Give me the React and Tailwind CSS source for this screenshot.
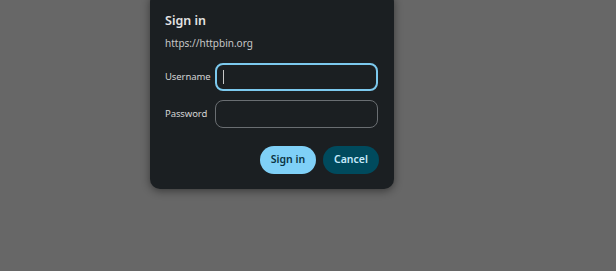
import React from 'react';

function App() {
  return (
    <div className="min-h-screen w-full bg-[#676767] font-['Noto_Sans',sans-serif]">
      <div className="ml-[150px] mt-[-8px] w-[244px] rounded-[10px] bg-[#1b1f22] pl-[15px] pr-[15px] pt-[20px] pb-[15px] shadow-[0_2px_8px_rgba(0,0,0,0.45)]">
        <h1 className="text-[12.5px] font-semibold leading-[18px] text-[#e3e3e3]">Sign in</h1>
        <p className="mt-[5px] text-[10px] leading-[16px] text-[#c7c7c7]">https://httpbin.org</p>

        <div className="mt-[12px] flex items-center">
          <label className="w-[50px] text-[9.5px] tracking-[-0.1px] text-[#d4d4d4]">Username</label>
          <div className="flex h-[28px] w-[163px] items-center rounded-[8px] border-2 border-[#7cc9ee] px-[6px]">
            <span className="h-[14px] w-px bg-[#c8c8c8]" />
          </div>
        </div>

        <div className="mt-[9px] flex items-center">
          <label className="w-[50px] text-[9.5px] tracking-[-0.1px] text-[#d4d4d4]">Password</label>
          <div className="h-[28px] w-[163px] rounded-[8px] border border-[#6a6e72]" />
        </div>

        <div className="mt-[18px] flex justify-end gap-[7px]">
          <button className="h-[28px] w-[56px] rounded-full bg-[#7fd0f7] text-[10.5px] font-semibold text-[#0b3342]">Sign in</button>
          <button className="h-[28px] w-[56px] rounded-full bg-[#004a5d] text-[10.5px] font-semibold text-[#c4e9fb]">Cancel</button>
        </div>
      </div>
    </div>
  );
}

export default App;
